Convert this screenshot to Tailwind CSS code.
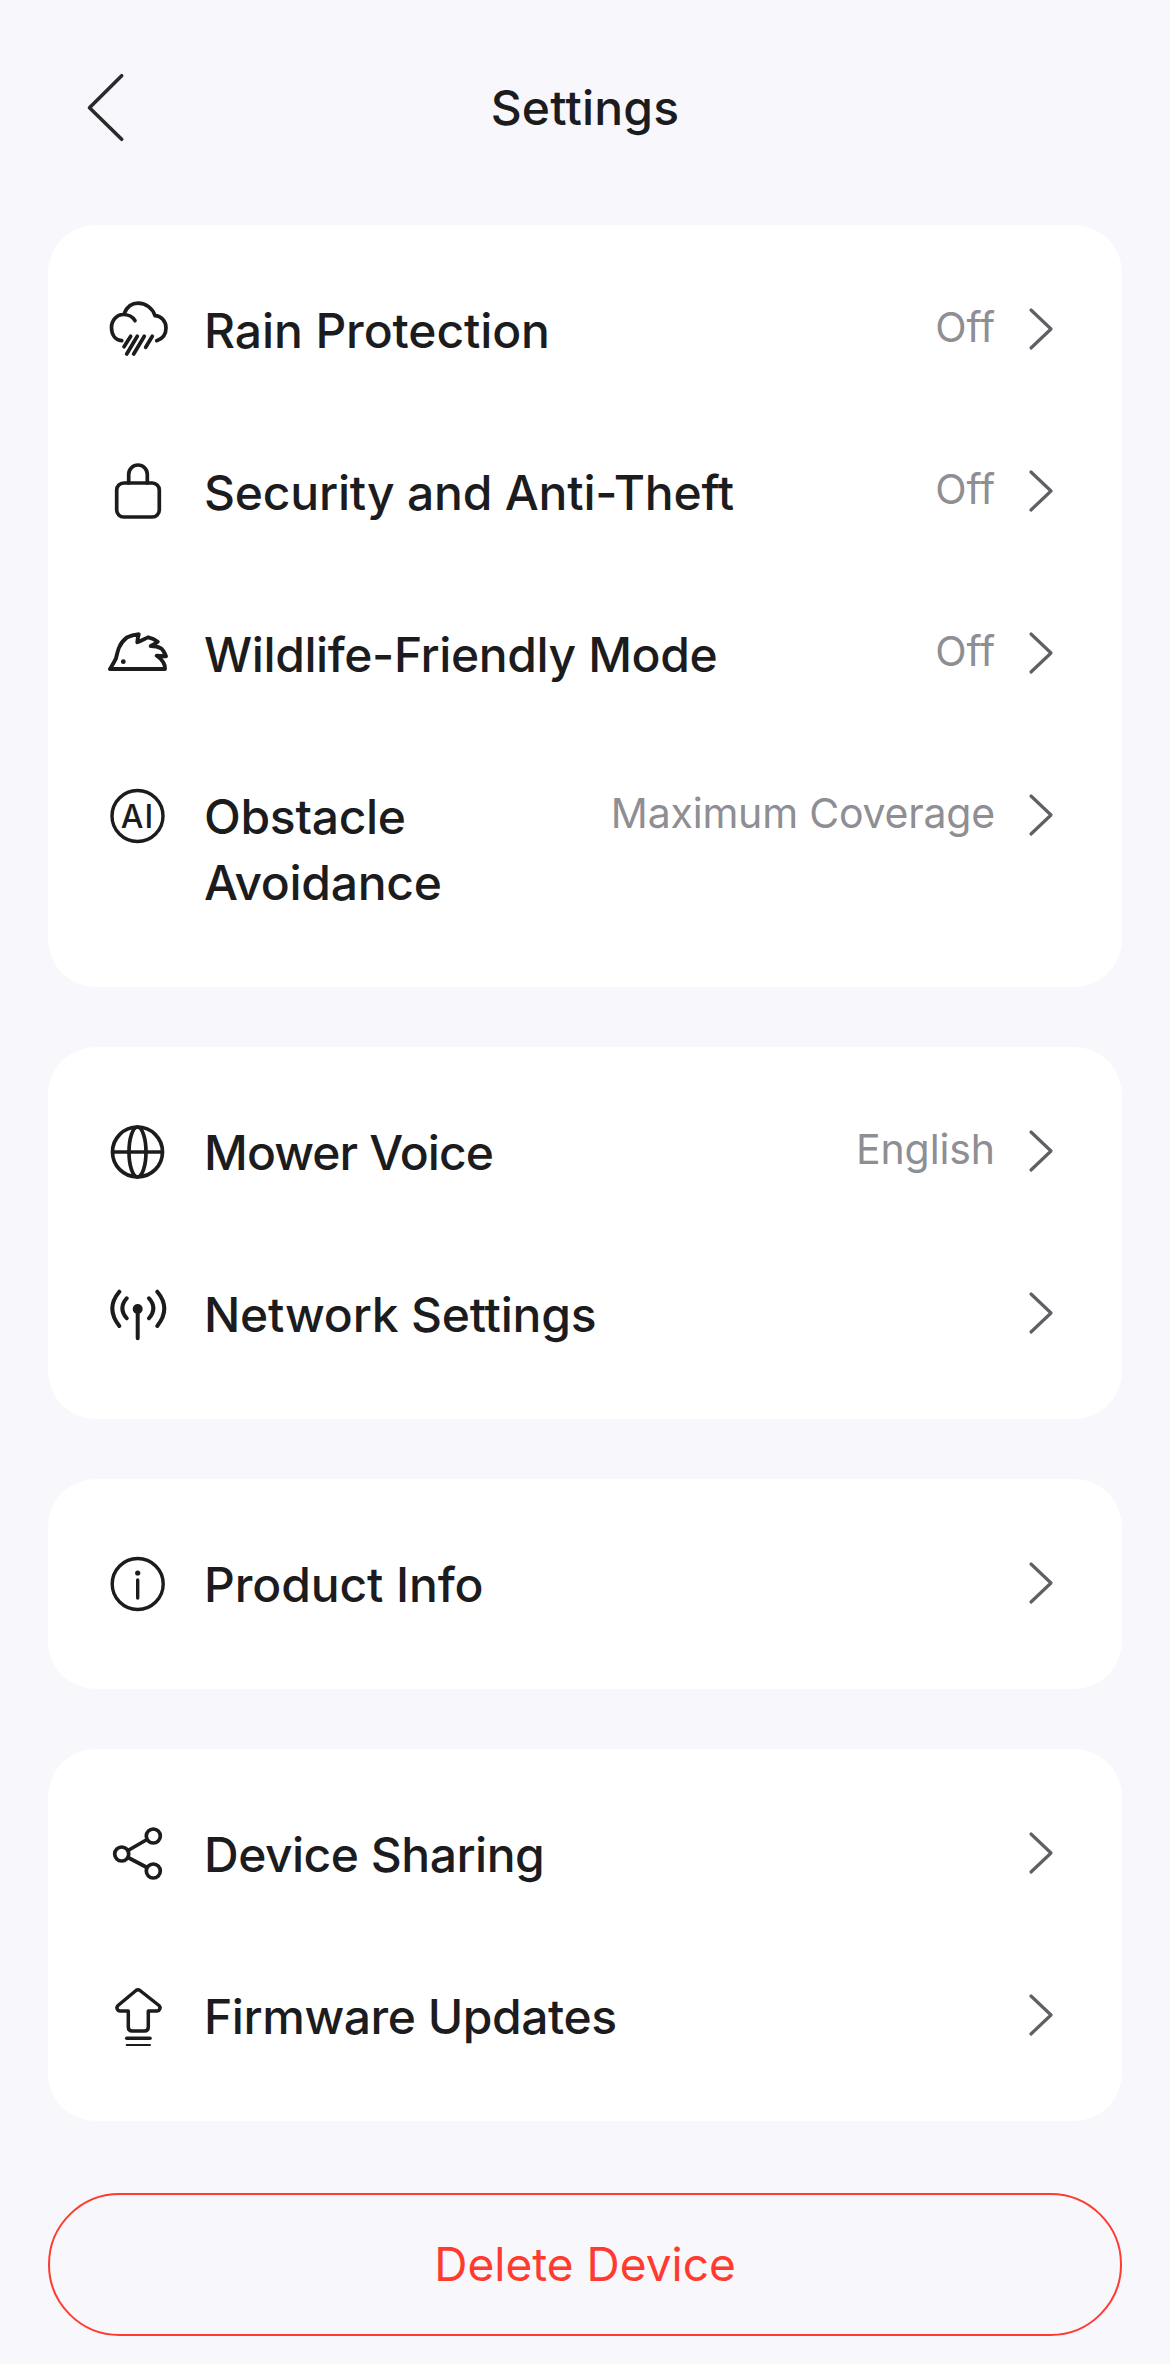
<!DOCTYPE html>
<html lang="en">
<head>
  <meta charset="UTF-8" />
  <meta name="viewport" content="width=device-width, initial-scale=1" />
  <title>Settings</title>
  <script src="https://cdn.jsdelivr.net/npm/@tailwindcss/browser@4"></script>
</head>
<body class="min-h-screen bg-[#f7f7fc] font-['Inter',sans-serif] text-[#1c1c1e]">
  <header class="relative flex h-[216px] items-center justify-center mb-[9px]">
    <svg class="absolute left-[80px] top-[68px] w-[50px] h-[80px]" viewBox="0 0 50 80" fill="none" stroke="#2a2a2c" stroke-width="3.6" stroke-linecap="round" stroke-linejoin="round"><path d="M41.700 7.700 9.500 39.700l32.200 31.600"/></svg>
    <h1 class="text-[48px] leading-[66px] font-medium tracking-[0.2px]">Settings</h1>
  </header>

  <main class="flex flex-col gap-[60px] px-[48px]">
    <section class="bg-white rounded-[48px] py-[24px]">
      <div class="flex items-start pt-[49px] pb-[47px] pl-[60px] pr-[66px]">
        <svg class="w-[60px] h-[60px] mt-[2px] shrink-0" viewBox="0 0 60 60" fill="none" stroke="#1c1c1e" stroke-width="3.700" stroke-linecap="round" stroke-linejoin="round"><path d="M13.700 40.700C7 40 3.500 34.500 3.500 27.500 3.500 20 9 14.500 15 14.500c5 0 10 2.500 12 6.200M16.300 13.300C19 7 24 3.200 30 3.200c8 0 14.500 5 17 12.500 6 .3 11 5.300 11 12.300 0 7-4 11-9.300 12.700"/><path d="M22.700 36.300 16 46.700M29.300 36.300 18.700 54M36.300 36.300 25.700 54M44.300 36.300 37.700 47.300"/></svg>
        <span class="ml-[36px] text-[48px] leading-[66px] font-medium tracking-[-0.1px]">Rain Protection</span>
        <span class="ml-auto -mt-[4px] text-[41px] leading-[66px] text-[#8e8e93] tracking-[-0.1px]">Off</span>
        <svg class="ml-[31px] mt-[1px] w-[30px] h-[60px] shrink-0" viewBox="0 0 30 60" fill="none" stroke="#5f5f66" stroke-width="3.200" stroke-linecap="round" stroke-linejoin="round"><path d="m5 11 20 19L5 49"/></svg>
      </div>
      <div class="flex items-start pt-[49px] pb-[47px] pl-[60px] pr-[66px]">
        <svg class="w-[60px] h-[60px] mt-[2px] shrink-0" viewBox="0 0 60 60" fill="none" stroke="#1c1c1e" stroke-width="3.700" stroke-linecap="round" stroke-linejoin="round"><rect x="8.700" y="21" width="42.600" height="34" rx="7"/><path d="M20.700 21v-8.700a9.300 9.300 0 0 1 18.600 0V21"/></svg>
        <span class="ml-[36px] text-[48px] leading-[66px] font-medium tracking-[-0.2px]">Security and Anti-Theft</span>
        <span class="ml-auto -mt-[4px] text-[41px] leading-[66px] text-[#8e8e93] tracking-[-0.1px]">Off</span>
        <svg class="ml-[31px] mt-[1px] w-[30px] h-[60px] shrink-0" viewBox="0 0 30 60" fill="none" stroke="#5f5f66" stroke-width="3.200" stroke-linecap="round" stroke-linejoin="round"><path d="m5 11 20 19L5 49"/></svg>
      </div>
      <div class="flex items-start pt-[49px] pb-[47px] pl-[60px] pr-[66px]">
        <svg class="w-[60px] h-[60px] mt-[2px] shrink-0" viewBox="0 0 60 60" fill="none" stroke="#1c1c1e" stroke-width="3.900" stroke-linecap="round" stroke-linejoin="round"><path d="M2 45h55c0-3-.5-5-1.700-6.700-1.500-2.800-3.800-4.800-6.600-6.600 3 0 6 .3 9.300.6-1.500-3.600-3.500-6.800-5-8-3-1.800-7-2.300-10.300-2.300 2.500-1.200 5-2.700 7-4.300-2.500-2-6-3.700-9.400-4.400-3.500 1.500-7.300 3.500-11 5 .2-2.700.7-5.500 1.400-8-4 .3-8.500 1.500-12 3.300-3.400 2.700-6 6-7.400 9.400C9.800 26 9 30.500 8 34.300 6.500 38 4 41.500 2 45Z"/><circle cx="15.300" cy="37.700" r="2.400" fill="#1c1c1e" stroke="none"/></svg>
        <span class="ml-[36px] text-[48px] leading-[66px] font-medium tracking-[-0.4px]">Wildlife-Friendly Mode</span>
        <span class="ml-auto -mt-[4px] text-[41px] leading-[66px] text-[#8e8e93] tracking-[-0.1px]">Off</span>
        <svg class="ml-[31px] mt-[1px] w-[30px] h-[60px] shrink-0" viewBox="0 0 30 60" fill="none" stroke="#5f5f66" stroke-width="3.200" stroke-linecap="round" stroke-linejoin="round"><path d="m5 11 20 19L5 49"/></svg>
      </div>
      <div class="flex items-start pt-[49px] pb-[47px] pl-[60px] pr-[66px]">
        <svg class="w-[60px] h-[60px] mt-[2px] shrink-0" viewBox="0 0 60 60" fill="none" stroke="#1c1c1e" stroke-width="3.400"><circle cx="29.500" cy="30" r="25.500"/><text x="29.500" y="41.500" text-anchor="middle" letter-spacing="1" font-family="Inter" font-size="32" font-weight="500" fill="#1c1c1e" stroke="none">AI</text></svg>
        <span class="ml-[36px] w-[320px] text-[48px] leading-[66px] font-medium tracking-[-0.3px]">Obstacle Avoidance</span>
        <span class="ml-auto -mt-[4px] text-[41px] leading-[66px] text-[#8e8e93] tracking-[-0.2px]">Maximum Coverage</span>
        <svg class="ml-[31px] mt-[1px] w-[30px] h-[60px] shrink-0" viewBox="0 0 30 60" fill="none" stroke="#5f5f66" stroke-width="3.200" stroke-linecap="round" stroke-linejoin="round"><path d="m5 11 20 19L5 49"/></svg>
      </div>
    </section>

    <section class="bg-white rounded-[48px] py-[24px]">
      <div class="flex items-start pt-[49px] pb-[47px] pl-[60px] pr-[66px]">
        <svg class="w-[60px] h-[60px] mt-[2px] shrink-0" viewBox="0 0 60 60" fill="none" stroke="#1c1c1e" stroke-width="3.700"><circle cx="29.500" cy="30" r="25"/><ellipse cx="29.500" cy="30" rx="8.500" ry="25"/><path d="M4.500 30h50"/></svg>
        <span class="ml-[36px] text-[48px] leading-[66px] font-medium tracking-[-0.9px]">Mower Voice</span>
        <span class="ml-auto -mt-[4px] text-[41px] leading-[66px] text-[#8e8e93] tracking-[-0.1px]">English</span>
        <svg class="ml-[31px] mt-[1px] w-[30px] h-[60px] shrink-0" viewBox="0 0 30 60" fill="none" stroke="#5f5f66" stroke-width="3.200" stroke-linecap="round" stroke-linejoin="round"><path d="m5 11 20 19L5 49"/></svg>
      </div>
      <div class="flex items-start pt-[49px] pb-[47px] pl-[60px] pr-[66px]">
        <svg class="w-[60px] h-[60px] mt-[2px] shrink-0" viewBox="0 0 60 60" fill="none" stroke="#1c1c1e" stroke-width="4" stroke-linecap="round" stroke-linejoin="round"><circle cx="29.700" cy="25" r="5" fill="#1c1c1e" stroke="none"/><path d="M29.700 27v27.300M18.700 14.300Q10 24.300 18.700 34.300M41 14.300q8.700 10 0 20M11.300 7.700q-14 16.600 0 34.300M49.300 7.700q14 16.600 0 34.300"/></svg>
        <span class="ml-[36px] text-[48px] leading-[66px] font-medium tracking-[-0.2px]">Network Settings</span>
        <svg class="ml-auto mt-[1px] w-[30px] h-[60px] shrink-0" viewBox="0 0 30 60" fill="none" stroke="#5f5f66" stroke-width="3.200" stroke-linecap="round" stroke-linejoin="round"><path d="m5 11 20 19L5 49"/></svg>
      </div>
    </section>

    <section class="bg-white rounded-[48px] py-[24px]">
      <div class="flex items-start pt-[49px] pb-[47px] pl-[60px] pr-[66px]">
        <svg class="w-[60px] h-[60px] mt-[2px] shrink-0" viewBox="0 0 60 60" fill="none" stroke="#1c1c1e" stroke-width="3.400" stroke-linecap="round"><circle cx="29.700" cy="30" r="25.500"/><circle cx="29.700" cy="19" r="2.600" fill="#1c1c1e" stroke="none"/><path d="M29.700 26v18"/></svg>
        <span class="ml-[36px] text-[48px] leading-[66px] font-medium tracking-[-0.1px]">Product Info</span>
        <svg class="ml-auto mt-[1px] w-[30px] h-[60px] shrink-0" viewBox="0 0 30 60" fill="none" stroke="#5f5f66" stroke-width="3.200" stroke-linecap="round" stroke-linejoin="round"><path d="m5 11 20 19L5 49"/></svg>
      </div>
    </section>

    <section class="bg-white rounded-[48px] py-[24px]">
      <div class="flex items-start pt-[49px] pb-[47px] pl-[60px] pr-[66px]">
        <svg class="w-[60px] h-[60px] mt-[2px] shrink-0" viewBox="0 0 60 60" fill="none" stroke="#1c1c1e" stroke-width="3.700"><circle cx="13.700" cy="30" r="7"/><circle cx="45.300" cy="12" r="7"/><circle cx="45.300" cy="47" r="7"/><path d="m20 26.500 19-11M20 33.500l19 10"/></svg>
        <span class="ml-[36px] text-[48px] leading-[66px] font-medium tracking-[-0.5px]">Device Sharing</span>
        <svg class="ml-auto mt-[1px] w-[30px] h-[60px] shrink-0" viewBox="0 0 30 60" fill="none" stroke="#5f5f66" stroke-width="3.200" stroke-linecap="round" stroke-linejoin="round"><path d="m5 11 20 19L5 49"/></svg>
      </div>
      <div class="flex items-start pt-[49px] pb-[47px] pl-[60px] pr-[66px]">
        <svg class="w-[60px] h-[60px] mt-[2px] shrink-0" viewBox="0 0 60 60" fill="none" stroke="#1c1c1e" stroke-width="3.500" stroke-linecap="round" stroke-linejoin="round"><path d="M28 4.500 10 19.500c-2 2-1 5 2 5.500h8.300v16c0 2.500 1.500 4 4 4h12c2.500 0 4-1.500 4-4V25H49c3-.5 4-3.500 2-5.500L32 4.500c-1.300-1-2.700-1-4 0Z"/><path d="M18.700 52.300H42"/><path stroke-width="2" d="M18.700 59H42"/></svg>
        <span class="ml-[36px] text-[48px] leading-[66px] font-medium tracking-[-0.45px]">Firmware Updates</span>
        <svg class="ml-auto mt-[1px] w-[30px] h-[60px] shrink-0" viewBox="0 0 30 60" fill="none" stroke="#5f5f66" stroke-width="3.200" stroke-linecap="round" stroke-linejoin="round"><path d="m5 11 20 19L5 49"/></svg>
      </div>
    </section>
  </main>

  <div class="px-[48px] mt-[72px]">
    <button class="w-full h-[143px] rounded-full border-2 border-[#ff3b30] text-[#ff3b30] text-[46px]">Delete Device</button>
  </div>
</body>
</html>
